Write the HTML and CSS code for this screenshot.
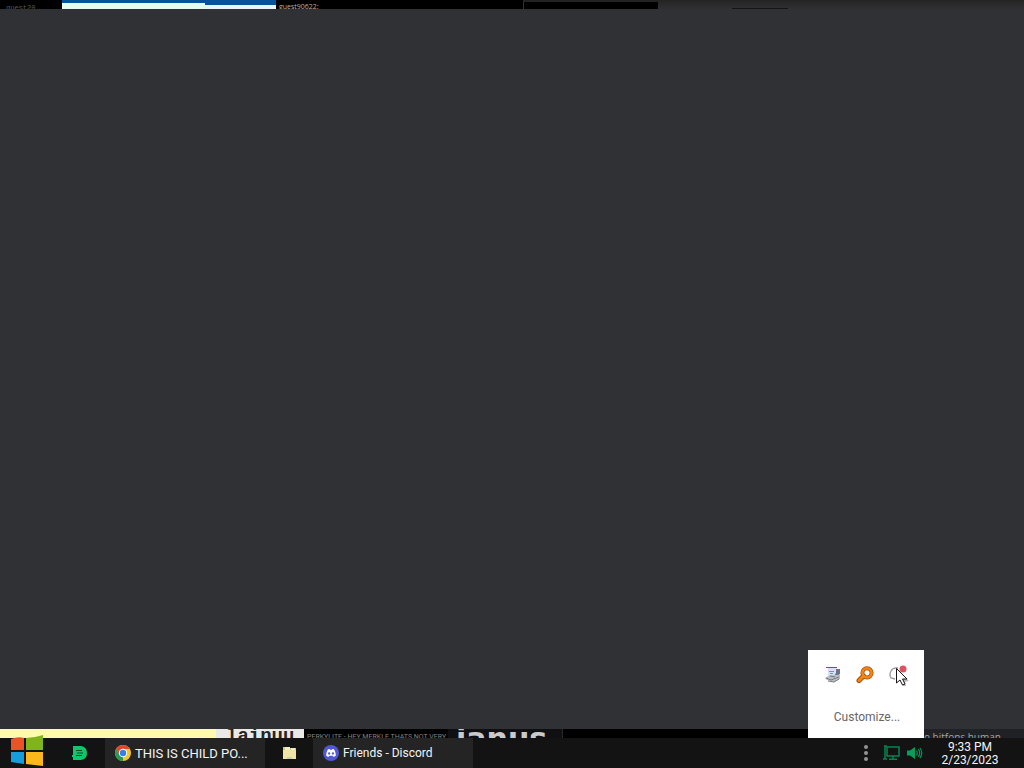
FILE: index.html
```html
<!DOCTYPE html>
<html lang="en">
<head>
<meta charset="utf-8">
<title>Desktop</title>
<link rel="stylesheet" href="styles.css">
</head>
<body>
<div class="strip top-strip">
  <div class="top-dark"><span class="scrap scrap-user">guest20</span></div>
  <div class="top-page"><div class="top-page-wide"></div><div class="top-page-narrow"></div></div>
  <div class="top-black"><span class="scrap scrap-guest">guest90622:</span></div>
  <div class="top-field"></div>
  <div class="top-rest"><div class="top-line"></div></div>
</div>
<main class="window"></main>
<div class="strip bottom-strip">
  <div class="cream"></div>
  <div class="paper"><span class="scrap scrap-title">lainuu</span></div>
  <div class="caption"><span class="scrap scrap-caption">PERKYLITE - HEY MERKLE THATS NOT VERY</span></div>
  <div class="logo-part"><span class="scrap scrap-logo">ianus</span></div>
  <div class="bottom-black"></div>
  <div class="bottom-chat"><span class="scrap scrap-chat">o bitfons human</span></div>
</div>
<footer class="taskbar">
  <button class="start" aria-label="Start">
    <svg width="34" height="32" viewBox="0 0 34 32">
      <path fill="#e95425" d="M1 4Q8 1 14 3V15H1z"/>
      <path fill="#7fb51b" d="M16 3Q24 3 33 0V15H16z"/>
      <path fill="#159edb" d="M1 17H14V29L1 27z"/>
      <path fill="#fbb81b" d="M16 17H33V31L16 29z"/>
    </svg>
  </button>
  <button class="pin pin-deezer" aria-label="D app">
    <svg width="16" height="14" viewBox="0 0 16 14">
      <path fill="#10c66b" d="M1 0H9Q15 1 15 7Q15 13 9 14H1V11H0V9H1z"/>
      <path stroke="#0a4b2d" stroke-width="1.2" d="M4 4.5H10M5 7H11M4 9.5H10"/>
    </svg>
  </button>
  <button class="task task-chrome">
    <svg width="16" height="16" viewBox="0 0 16 16">
      <circle cx="8" cy="8" r="8" fill="#f5c52c"/>
      <path fill="#e04433" d="M1.1 4A8 8 0 0 1 14.9 4H8L4.5 10z"/>
      <path fill="#239a55" d="M1.1 4L4.5 10L8 12L8 16A8 8 0 0 1 1.1 4z"/>
      <circle cx="8" cy="8" r="4.2" fill="#fff"/>
      <circle cx="8" cy="8" r="3.2" fill="#367ee8"/>
    </svg>
    <span>THIS IS CHILD PO...</span>
  </button>
  <button class="pin pin-folder" aria-label="Files">
    <svg width="15" height="14" viewBox="0 0 15 14">
      <path fill="#d8c67d" d="M1 1H6L8 2H14V13H1z"/>
      <path fill="#eeeecb" d="M3 1H8V4H3zM9 2H13V5H9z"/>
      <path fill="#efe4a4" d="M1 4H14V13H1z"/>
      <path fill="#b7d5bd" d="M5 11H10V13H5z"/>
    </svg>
  </button>
  <button class="task task-discord">
    <svg width="16" height="16" viewBox="0 0 16 16">
      <circle cx="8" cy="8" r="8" fill="#5058d6"/>
      <path fill="#fff" d="M5 4.3L6.600 4L7 4.700H9L9.400 4L11 4.300Q12.800 7 12.900 10.400Q11.700 11.500 10.300 11.800L9.600 10.800H6.400L5.700 11.800Q4.300 11.500 3.100 10.400Q3.200 7 5 4.300z"/>
      <ellipse cx="6.1" cy="8.4" rx="1.1" ry="1.2" fill="#5058d6"/>
      <ellipse cx="9.9" cy="8.4" rx="1.1" ry="1.2" fill="#5058d6"/>
    </svg>
    <span>Friends - Discord</span>
  </button>
  <div class="tray">
    <button class="tray-button" aria-label="Show hidden icons">
      <svg width="6" height="18" viewBox="0 0 6 18" fill="#949494"><circle cx="3" cy="3" r="2"/><circle cx="3" cy="9" r="2"/><circle cx="3" cy="15" r="2"/></svg>
    </button>
    <button class="tray-button tray-network" aria-label="Network">
      <svg width="17" height="16" viewBox="0 0 17 16" fill="none" stroke="#08834e" stroke-width="1.5">
        <path d="M4 2H16V11H4zM10 11V14M6 14.2H14M1 1H4M2 1V14M0 14H4"/>
      </svg>
    </button>
    <button class="tray-button tray-volume" aria-label="Volume">
      <svg width="16" height="14" viewBox="0 0 16 14">
        <path fill="#0b9c5b" d="M0 4.500H3L8 1V13L3 9.500H0z"/>
        <path fill="none" stroke="#0b8f54" stroke-width="1.3" d="M9.500 4.500Q11 7 9.500 9.500M11.300 3Q14 7 11.300 11M13 2Q16.500 7 13 12"/>
      </svg>
    </button>
    <button class="clock"><span>9:33 PM</span><span>2/23/2023</span></button>
  </div>
</footer>
<section class="overflow" aria-label="Hidden icons">
  <div class="overflow-icons">
    <button class="tray-button" aria-label="Device">
      <svg width="16" height="16" viewBox="0 0 16 16">
        <path fill="#d5e5ed" d="M3 1H12V10H3z"/>
        <path fill="#2b7189" d="M1 0H12V1H1z"/>
        <path fill="#7195c0" d="M4 4H9V5H4zM5 6H8V7H5z"/>
        <path fill="#67748a" d="M11 2H15V7L12 9L9 9L11 6z"/>
        <path fill="#b9bec2" d="M0 11L5 8L15 8V12L9 15L2 13z"/>
        <path fill="none" stroke="#747b80" d="M1 11L6 13L14 10M3 14L9 15L14 12M5 9L10 10"/>
      </svg>
    </button>
    <button class="tray-button" aria-label="Search">
      <svg width="18" height="18" viewBox="0 0 18 18" fill="none">
        <path stroke="#a54c0c" stroke-width="5" stroke-linecap="round" d="M7.500 10L3 14.500"/>
        <circle cx="11" cy="6.8" r="4.6" stroke="#a54c0c" stroke-width="4"/>
        <path stroke="#f58612" stroke-width="3" stroke-linecap="round" d="M7.500 10L3 14.500"/>
        <circle cx="11" cy="6.8" r="4.6" stroke="#f58612" stroke-width="2.5"/>
      </svg>
    </button>
    <button class="tray-button" aria-label="Notifications">
      <svg width="20" height="22" viewBox="0 0 20 22">
        <path fill="none" stroke="#999" stroke-width="1.3" d="M9 4Q4 3 2 7Q0 11 2 14L6 15"/>
        <circle cx="14" cy="5" r="3.5" fill="#df5361"/>
        <path fill="#bbb" d="M9 6L20 17L16 18L17 22L14 22z"/>
        <path fill="#fff" stroke="#161616" d="M7.500 4.500V19L11 16L13.500 21L16 20L13.500 15H18z"/>
      </svg>
    </button>
  </div>
  <a class="customize" href="#">Customize...</a>
</section>
</body>
</html>
```
FILE: styles.css
```css
* { box-sizing: border-box; }
body {
  margin: 0;
  height: 100vh;
  display: flex;
  flex-direction: column;
  position: relative;
  overflow: hidden;
  background: #303135;
  font: 12px/13px Roboto, "Liberation Sans", sans-serif;
}
button {
  border: 0;
  padding: 0;
  background: none;
  color: inherit;
  font: inherit;
  display: flex;
  align-items: center;
  justify-content: center;
}
svg { display: block; flex: none; }
.window { flex: 1; }
.strip { display: flex; height: 9px; flex: none; background: #000; }
.strip > div { overflow: hidden; }
.scrap { display: block; white-space: nowrap; }
.top-dark { width: 62px; padding: 4px 6px 0; }
.scrap-user { color: #5b5b5b; font: 7px/8px "Liberation Mono", monospace; }
.top-page { width: 214px; display: flex; background: #07529a; align-items: flex-end; }
.top-page-wide { width: 143px; height: 6px; background: #e5fbf2; }
.top-page-narrow { flex: 1; height: 4px; background: #eaf3fd; }
.top-black { width: 247px; padding: 3px 3px 0; }
.scrap-guest { color: #b4b4b4; font: 7px/8px "Open Sans", sans-serif; }
.top-field { width: 135px; border-top: 2px solid #222; border-left: 1px solid #333; }
.top-rest { flex: 1; padding: 8px 0 0 74px; background: linear-gradient(#242424, #303033); }
.top-line { width: 56px; height: 1px; background: #151515; }
.cream { width: 216px; background: #fdfab0; }
.paper { width: 88px; padding-left: 10px; background: #e9e9e8; }
.scrap-title { color: #252525; font: bold 19px/15px "Liberation Mono", monospace; }
.caption { width: 144px; padding: 3px 3px 0; }
.scrap-caption { color: #828282; font: 7px/10px Roboto, sans-serif; }
.logo-part { width: 115px; padding-left: 8px; background: #101012; border-right: 1px solid #29292c; }
.scrap-logo { color: #cacaca; font: bold 30px/20px "DejaVu Sans", sans-serif; }
.bottom-black { flex: 1; }
.bottom-chat { width: 102px; padding: 3px 2px 0; background: #202124; }
.scrap-chat { color: #a2a2a2; font: 10px/10px "Open Sans", sans-serif; }
.taskbar { display: flex; height: 30px; flex: none; background: #131313; color: #f4f4f4; }
.start { width: 54px; height: 34px; margin-top: -4px; }
.pin-deezer { width: 51px; }
.task { width: 160px; justify-content: flex-start; gap: 4px; padding-left: 10px; background: #242424; white-space: nowrap; }
.task-chrome { font-size: 13px; }
.pin-folder { width: 48px; }
.tray { display: flex; margin-left: auto; padding-right: 24px; }
.tray-network { margin-left: 14px; }
.tray-volume { margin-left: 7px; }
.clock { flex-direction: column; margin-left: 17px; width: 60px; padding-top: 2px; }
.overflow {
  position: absolute;
  right: 100px;
  bottom: 30px;
  width: 116px;
  height: 88px;
  padding: 13px 15px 0 17px;
  display: flex;
  flex-direction: column;
  align-items: center;
  gap: 10px;
  background: #fff;
}
.overflow-icons { display: flex; align-items: center; gap: 15px; height: 24px; }
.customize { padding-top: 14px; color: #666; text-decoration: none; }
```
